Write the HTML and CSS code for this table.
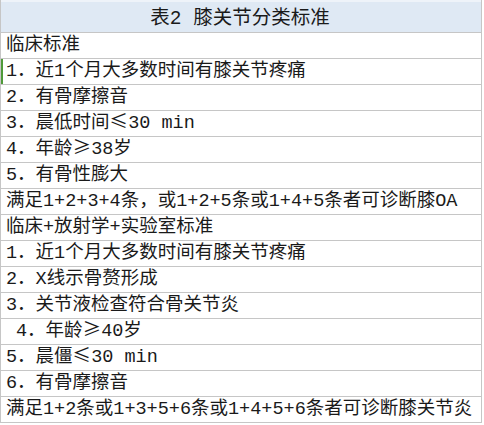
FILE: index.html
```html
<!DOCTYPE html>
<html lang="zh-CN">
<head>
<meta charset="utf-8">
<title>表2 膝关节分类标准</title>
<link rel="stylesheet" href="styles.css">
</head>
<body>
<div class="sheet">
  <div class="row title">表2 膝关节分类标准</div>
  <div class="row">临床标准</div>
  <div class="row sel">1．近1个月大多数时间有膝关节疼痛</div>
  <div class="row">2．有骨摩擦音</div>
  <div class="row">3．晨低时间<span class="sym">≤</span>30 min</div>
  <div class="row">4．年龄<span class="sym">≥</span>38岁</div>
  <div class="row">5．有骨性膨大</div>
  <div class="row">满足1+2+3+4条，或1+2+5条或1+4+5条者可诊断膝OA</div>
  <div class="row">临床+放射学+实验室标准</div>
  <div class="row">1．近1个月大多数时间有膝关节疼痛</div>
  <div class="row">2．X线示骨赘形成</div>
  <div class="row">3．关节液检查符合骨关节炎</div>
  <div class="row indent">4．年龄<span class="sym">≥</span>40岁</div>
  <div class="row">5．晨僵<span class="sym">≤</span>30 min</div>
  <div class="row">6．有骨摩擦音</div>
  <div class="row">满足1+2条或1+3+5+6条或1+4+5+6条者可诊断膝关节炎</div>
</div>
</body>
</html>
```

FILE: styles.css
```css
html, body {
  margin: 0;
  padding: 0;
  background: #ffffff;
}

.sheet {
  width: 482px;
  display: flex;
  flex-direction: column;
  border-left: 1px solid #c6c6c6;
  border-right: 1px solid #c6c6c6;
  box-sizing: border-box;
  font-family: "Liberation Mono", "Noto Sans CJK SC", monospace;
  font-size: 18.5px;
  color: #1a1a1a;
}

.row {
  height: 25px;
  line-height: 26px;
  border-bottom: 1px solid #c6c6c6;
  padding-left: 5px;
  white-space: nowrap;
}

.sym {
  font-family: "Noto Sans CJK SC", sans-serif;
  line-height: 0;
}

.title {
  box-sizing: border-box;
  height: 33px;
  line-height: 34px;
  font-size: 19.5px;
  background: #dfe9f4;
  border-top: 2px solid #eef3f9;
  text-align: center;
  padding-left: 0;
  padding-right: 2px;
}

.sel {
  box-shadow: inset 2px 0 0 #4f9a3a;
}

.indent {
  padding-left: 15px;
}
```
